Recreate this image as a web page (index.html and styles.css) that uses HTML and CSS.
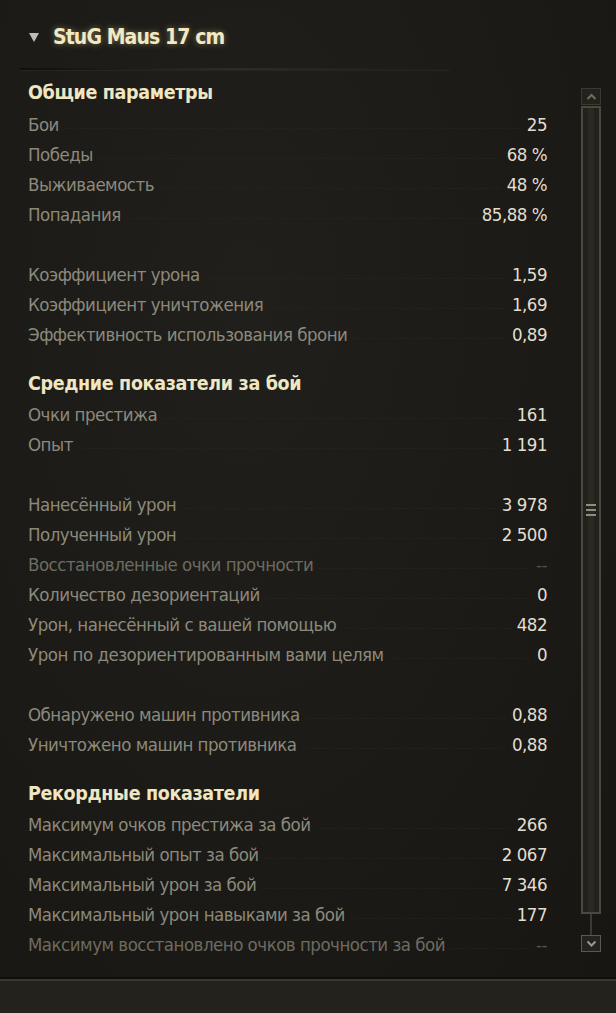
FILE: index.html
```html
<!DOCTYPE html>
<html lang="ru">
<head>
<meta charset="utf-8">
<link rel="stylesheet" href="styles.css">
</head>
<body>
<div class="panel">
  <div class="title">
    <span class="tri"></span>
    <span class="name">StuG Maus 17 cm</span>
  </div>
  <div class="sep"></div>
  <div class="body">
    <div class="list">
      <div class="hdr">Общие параметры</div>
      <div class="row"><span class="lbl">Бои</span><span class="dots"></span><span class="val">25</span></div>
      <div class="row"><span class="lbl">Победы</span><span class="dots"></span><span class="val">68 %</span></div>
      <div class="row"><span class="lbl">Выживаемость</span><span class="dots"></span><span class="val">48 %</span></div>
      <div class="row"><span class="lbl">Попадания</span><span class="dots"></span><span class="val">85,88 %</span></div>
      <div class="gap"></div>
      <div class="row"><span class="lbl">Коэффициент урона</span><span class="dots"></span><span class="val">1,59</span></div>
      <div class="row"><span class="lbl">Коэффициент уничтожения</span><span class="dots"></span><span class="val">1,69</span></div>
      <div class="row"><span class="lbl">Эффективность использования брони</span><span class="dots"></span><span class="val">0,89</span></div>
      <div class="hdr hdr2">Средние показатели за бой</div>
      <div class="row"><span class="lbl">Очки престижа</span><span class="dots"></span><span class="val">161</span></div>
      <div class="row"><span class="lbl">Опыт</span><span class="dots"></span><span class="val">1 191</span></div>
      <div class="gap"></div>
      <div class="row"><span class="lbl">Нанесённый урон</span><span class="dots"></span><span class="val">3 978</span></div>
      <div class="row"><span class="lbl">Полученный урон</span><span class="dots"></span><span class="val">2 500</span></div>
      <div class="row dim"><span class="lbl">Восстановленные очки прочности</span><span class="dots"></span><span class="val">--</span></div>
      <div class="row"><span class="lbl">Количество дезориентаций</span><span class="dots"></span><span class="val">0</span></div>
      <div class="row"><span class="lbl">Урон, нанесённый с вашей помощью</span><span class="dots"></span><span class="val">482</span></div>
      <div class="row"><span class="lbl">Урон по дезориентированным вами целям</span><span class="dots"></span><span class="val">0</span></div>
      <div class="gap"></div>
      <div class="row"><span class="lbl">Обнаружено машин противника</span><span class="dots"></span><span class="val">0,88</span></div>
      <div class="row"><span class="lbl">Уничтожено машин противника</span><span class="dots"></span><span class="val">0,88</span></div>
      <div class="hdr hdr2">Рекордные показатели</div>
      <div class="row"><span class="lbl">Максимум очков престижа за бой</span><span class="dots"></span><span class="val">266</span></div>
      <div class="row"><span class="lbl">Максимальный опыт за бой</span><span class="dots"></span><span class="val">2 067</span></div>
      <div class="row"><span class="lbl">Максимальный урон за бой</span><span class="dots"></span><span class="val">7 346</span></div>
      <div class="row"><span class="lbl">Максимальный урон навыками за бой</span><span class="dots"></span><span class="val">177</span></div>
      <div class="row dim"><span class="lbl">Максимум восстановлено очков прочности за бой</span><span class="dots"></span><span class="val">--</span></div>
    </div>
    <div class="scroll">
      <div class="sbtn up"><svg width="11" height="7" viewBox="0 0 11 7"><path d="M1.5 6 L5.5 2 L9.5 6" fill="none" stroke="#6f6d62" stroke-width="2"/></svg></div>
      <div class="track">
        <div class="thumb"><div class="grip"><i></i><i></i><i></i></div></div>
        <div class="rail"></div>
      </div>
      <div class="sbtn down"><svg width="11" height="7" viewBox="0 0 11 7"><path d="M1.5 1.5 L5.5 5.5 L9.5 1.5" fill="none" stroke="#9a988b" stroke-width="2"/></svg></div>
    </div>
  </div>
</div>
<div class="footer"></div>
</body>
</html>
```

FILE: styles.css
```css
html, body {
  margin: 0;
  padding: 0;
}
body {
  width: 616px;
  height: 1013px;
  background: #1c1b17;
  font-family: "DejaVu Sans Condensed", "Liberation Sans", sans-serif;
  overflow: hidden;
  display: flex;
  flex-direction: column;
}
.panel {
  height: 977px;
  background: radial-gradient(ellipse at 40% 30%, #201f1b 0%, #1b1a16 60%, #171613 100%);
  display: flex;
  flex-direction: column;
}
.title {
  height: 68px;
  display: flex;
  align-items: center;
  padding-left: 29px;
  gap: 14px;
  box-sizing: border-box;
  padding-top: 6px;
}
.tri {
  width: 0;
  height: 0;
  border-left: 5px solid transparent;
  border-right: 5px solid transparent;
  border-top: 9px solid #bdbcb5;
  margin-top: 1px;
}
.name {
  font-family: "DejaVu Sans Condensed", sans-serif;
  font-weight: bold;
  font-size: 21px;
  letter-spacing: -0.9px;
  color: #f2e9c4;
  text-shadow: 0 0 6px rgba(240, 220, 150, 0.45);
}
.sep {
  height: 2px;
  margin-left: 20px;
  width: 430px;
  background: linear-gradient(to right, #0f0f0c 0%, #2d2c26 50%, #22211c 80%, rgba(30,30,25,0) 100%);
  border-bottom: 1px solid #262520;
}
.body {
  flex: 1;
  display: flex;
  padding-top: 5px;
}
.list {
  width: 519px;
  padding-left: 28px;
}
.hdr {
  height: 33px;
  box-sizing: border-box;
  display: flex;
  align-items: center;
  font-weight: bold;
  font-size: 19.5px;
  letter-spacing: -0.35px;
  color: #efe6c2;
}
.hdr2 {
  height: 50px;
  padding-top: 18px;
}
.row {
  height: 30px;
  display: flex;
  align-items: center;
  font-size: 18.5px;
  letter-spacing: -0.5px;
}
.lbl {
  color: #8c897c;
  white-space: nowrap;
}
.dots {
  flex: 1;
  height: 1px;
  margin: 9px 6px 0 6px;
  background-image: linear-gradient(to right, #292823 50%, transparent 50%);
  background-size: 3px 1px;
}
.val {
  color: #e2ded0;
  white-space: nowrap;
}
.dim .lbl {
  color: #6e6b60;
}
.dim .val {
  color: #55534b;
}
.gap {
  height: 30px;
}
.scroll {
  margin-left: 34px;
  width: 20px;
  display: flex;
  flex-direction: column;
  padding-top: 12px;
  height: 876px;
  box-sizing: border-box;
}
.sbtn {
  width: 20px;
  height: 17px;
  box-sizing: border-box;
  border: 1px solid #3a3932;
  background: #23221d;
  display: flex;
  align-items: center;
  justify-content: center;
}
.down {
  border-color: #5b5a50;
  background: #24231e;
}
.track {
  flex: 1;
  display: flex;
  flex-direction: column;
  align-items: center;
  padding-top: 1px;
}
.thumb {
  width: 20px;
  height: 808px;
  box-sizing: border-box;
  border: 2px solid #4a4940;
  background: linear-gradient(to right, #22211c 0%, #22211c 30%, #2a2924 30%, #2a2924 70%, #22211c 70%);
  display: flex;
  align-items: center;
  justify-content: center;
}
.grip {
  display: flex;
  flex-direction: column;
  gap: 3px;
}
.grip i {
  display: block;
  width: 10px;
  height: 2px;
  background: #8f8d80;
}
.rail {
  flex: 1;
  width: 2px;
  background: #3a3932;
}
.footer {
  flex: 1;
  border-top: 2px solid #0e0e0b;
  box-shadow: inset 0 2px 0 #393830;
  background: #23221d;
}
```
